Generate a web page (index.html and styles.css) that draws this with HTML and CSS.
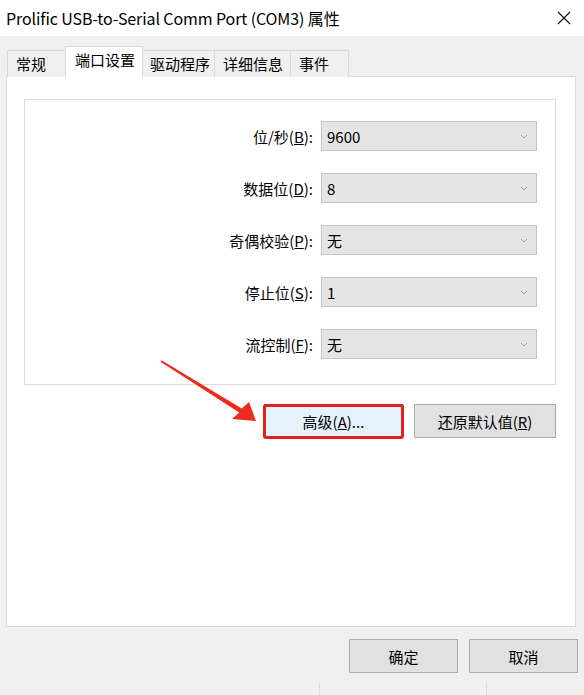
FILE: index.html
```html
<!DOCTYPE html>
<html lang="zh-CN">

<head>
    <meta charset="UTF-8">
    <meta name="viewport" content="width=device-width, initial-scale=1.0">
    <title>Prolific USB-to-Serial Comm Port (COM3) 属性</title>
    <link rel="stylesheet" href="styles.css">
</head>

<body>
    <div class="dialog">
        <div class="titlebar">
            <span class="title">Prolific USB-to-Serial Comm Port (COM3) 属性</span>
            <svg class="close-icon" width="14" height="14" viewBox="0 0 14 14">
                <path d="M1 1 L13 13 M13 1 L1 13" stroke="#111" stroke-width="1.1" fill="none" />
            </svg>
        </div>

        <div class="tabs">
            <div class="tab tab-general">常规</div>
            <div class="tab tab-port active">端口设置</div>
            <div class="tab tab-driver">驱动程序</div>
            <div class="tab tab-details">详细信息</div>
            <div class="tab tab-events">事件</div>
        </div>

        <div class="panel">
            <div class="group">
                <div class="field">
                    <label>位/秒(<u>B</u>):</label>
                    <div class="combo"><span>9600</span><svg class="chevron" width="8" height="5" viewBox="0 0 8 5"><path d="M1 1 L4 4 L7 1" stroke="#a0a0a0" fill="none" /></svg></div>
                </div>
                <div class="field">
                    <label>数据位(<u>D</u>):</label>
                    <div class="combo"><span>8</span><svg class="chevron" width="8" height="5" viewBox="0 0 8 5"><path d="M1 1 L4 4 L7 1" stroke="#a0a0a0" fill="none" /></svg></div>
                </div>
                <div class="field">
                    <label>奇偶校验(<u>P</u>):</label>
                    <div class="combo"><span>无</span><svg class="chevron" width="8" height="5" viewBox="0 0 8 5"><path d="M1 1 L4 4 L7 1" stroke="#a0a0a0" fill="none" /></svg></div>
                </div>
                <div class="field">
                    <label>停止位(<u>S</u>):</label>
                    <div class="combo"><span>1</span><svg class="chevron" width="8" height="5" viewBox="0 0 8 5"><path d="M1 1 L4 4 L7 1" stroke="#a0a0a0" fill="none" /></svg></div>
                </div>
                <div class="field">
                    <label>流控制(<u>F</u>):</label>
                    <div class="combo"><span>无</span><svg class="chevron" width="8" height="5" viewBox="0 0 8 5"><path d="M1 1 L4 4 L7 1" stroke="#a0a0a0" fill="none" /></svg></div>
                </div>
            </div>

            <div class="panel-buttons">
                <div class="highlight">
                    <button class="btn btn-focus">高级(<u>A</u>)...</button>
                </div>
                <button class="btn btn-wide">还原默认值(<u>R</u>)</button>
            </div>
        </div>

        <div class="dialog-buttons">
            <button class="btn btn-ok">确定</button>
            <button class="btn btn-ok">取消</button>
        </div>

        <div class="footer-marks">
            <span class="mark mark-left"></span>
            <span class="mark mark-right"></span>
        </div>

        <!-- annotation arrow drawn over the dialog -->
        <svg class="arrow" width="584" height="695" viewBox="0 0 584 695">
            <polygon points="161.5,360.2 241.8,408.4 249,402 256,421 232,419 239.2,412.6 160.5,361.8" fill="#ec2a1e" />
        </svg>
    </div>
</body>

</html>
```

FILE: styles.css
```css
/* Base page */
body {
    margin: 0;
    background: #f0f0f0;
    font-family: "Noto Sans CJK SC", "Noto Sans", sans-serif;
    color: #000;
}

.dialog {
    position: relative;
    width: 584px;
    height: 695px;
    overflow: hidden;
}

/* Title bar */
.titlebar {
    height: 36px;
    background: #fff;
    display: flex;
    align-items: center;
    justify-content: space-between;
    padding: 0 13px 0 6px;
}

.title {
    font-size: 16px;
    letter-spacing: -0.1px;
}

.close-icon {
    display: block;
}

/* Tabs */
.tabs {
    display: flex;
    align-items: flex-end;
    padding: 10px 0 0 7px;
    margin-bottom: -1px;
    position: relative;
    z-index: 1;
}

.tab {
    height: 27px;
    box-sizing: border-box;
    border: 1px solid #d9d9d9;
    border-bottom: none;
    margin-left: -1px;
    padding: 0 0 0 8px;
    font-size: 15px;
    line-height: 25px;
    background: #f0f0f0;
}

.tab:first-child {
    margin-left: 0;
}

.tab-general { width: 59px; }
.tab-port { width: 78px; }
.tab-driver { width: 74px; }
.tab-details { width: 77px; }
.tab-events { width: 59px; }

.tab.active {
    height: 31px;
    background: #fff;
    padding-left: 9px;
    line-height: 25px;
    margin-right: -1px;
    position: relative;
    z-index: 2;
}

/* Tab content */
.panel {
    margin: 0 8px 0 6px;
    height: 551px;
    box-sizing: border-box;
    background: #fff;
    border: 1px solid #d9d9d9;
    padding: 22px 19px 0 17px;
}

.group {
    border: 1px solid #dcdcdc;
    padding: 21px 18px 25px 0;
    display: flex;
    flex-direction: column;
    gap: 22px;
}

.field {
    display: grid;
    grid-template-columns: 288px 216px;
    column-gap: 8px;
    align-items: center;
}

.field label {
    text-align: right;
    font-size: 15px;
}

.combo {
    height: 30px;
    box-sizing: border-box;
    background: #e5e5e5;
    border: 1px solid #c4c4c4;
    display: flex;
    align-items: center;
    justify-content: space-between;
    padding: 0 8px 0 5px;
    font-size: 15px;
}

.chevron {
    display: block;
}

/* Buttons */
.panel-buttons {
    display: flex;
    justify-content: flex-end;
    gap: 11px;
    margin-top: 19px;
}

.btn {
    height: 34px;
    box-sizing: border-box;
    background: #e1e1e1;
    border: 1px solid #adadad;
    font-family: inherit;
    font-size: 15px;
    color: #000;
    padding: 0;
}

.btn-wide {
    width: 142px;
}

.highlight {
    position: relative;
}

.highlight::after {
    content: "";
    position: absolute;
    inset: 0 -1px -1px -1px;
    border: 3px solid #e3201b;
    border-radius: 3px;
}

.btn-focus {
    display: block;
    width: 139px;
    background: #e5f1fb;
    border-color: #0078d7;
}

.dialog-buttons {
    display: flex;
    justify-content: flex-end;
    gap: 11px;
    margin: 12px 6px 0 0;
}

.btn-ok {
    width: 109px;
}

/* Faint lines of the window behind */
.footer-marks {
    display: flex;
    margin-top: 10px;
    height: 13px;
}

.mark {
    border-left: 1px solid #dcdcdc;
}

.mark-left {
    margin-left: 319px;
}

.mark-right {
    margin-left: 166px;
}

/* Annotation overlay */
.arrow {
    position: absolute;
    top: 0;
    left: 0;
    pointer-events: none;
}
```
